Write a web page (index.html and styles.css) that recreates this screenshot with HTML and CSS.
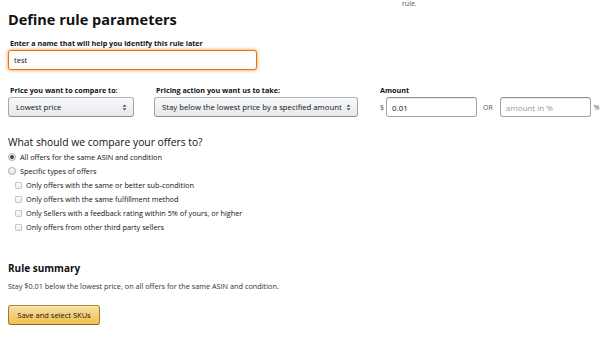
FILE: index.html
```html
<!DOCTYPE html>
<html lang="en">
<head>
  <meta charset="UTF-8" />
  <meta name="viewport" content="width=device-width, initial-scale=1.0"/>
  <title>Define rule parameters</title>
  <link rel="stylesheet" href="styles.css">
</head>
<body>
  <main class="page">
    <p class="top-note">rule.</p>
    <h1>Define rule parameters</h1>

    <label class="field-label" for="ruleName">Enter a name that will help you identify this rule later</label>
    <input type="text" id="ruleName" class="name-input" value="test" />

    <section class="price-row">
      <div class="col col-compare">
        <div class="field-label">Price you want to compare to:</div>
        <div class="select">
          <span>Lowest price</span>
          <svg class="arrows" width="5" height="7" viewBox="0 0 5 7"><path d="M0.5 2.8 L2.5 0.6 L4.5 2.8 Z M0.5 4.2 L2.5 6.4 L4.5 4.2 Z" fill="#555"/></svg>
        </div>
      </div>
      <div class="col col-action">
        <div class="field-label">Pricing action you want us to take:</div>
        <div class="select">
          <span>Stay below the lowest price by a specified amount</span>
          <svg class="arrows" width="5" height="7" viewBox="0 0 5 7"><path d="M0.5 2.8 L2.5 0.6 L4.5 2.8 Z M0.5 4.2 L2.5 6.4 L4.5 4.2 Z" fill="#555"/></svg>
        </div>
      </div>
      <div class="col col-amount">
        <div class="field-label">Amount</div>
        <div class="amount-inputs">
          <span class="unit">$</span>
          <input type="text" class="small-input" value="0.01" />
          <span class="or">OR</span>
          <input type="text" class="small-input" placeholder="amount in %" />
          <span class="unit">%</span>
        </div>
      </div>
    </section>

    <h2>What should we compare your offers to?</h2>
    <ul class="options">
      <li class="option"><span class="radio checked"></span>All offers for the same ASIN and condition</li>
      <li class="option"><span class="radio"></span>Specific types of offers</li>
      <li class="option sub"><span class="check"></span>Only offers with the same or better sub-condition</li>
      <li class="option sub"><span class="check"></span>Only offers with the same fulfillment method</li>
      <li class="option sub"><span class="check"></span>Only Sellers with a feedback rating within 5% of yours, or higher</li>
      <li class="option sub"><span class="check"></span>Only offers from other third party sellers</li>
    </ul>

    <h3>Rule summary</h3>
    <p class="summary">Stay $0.01 below the lowest price, on all offers for the same ASIN and condition.</p>

    <button type="button" class="save-btn">Save and select SKUs</button>
  </main>
</body>
</html>
```

FILE: styles.css
```css
body {
  margin: 0;
  padding: 0;
  background: #fff;
  color: #111;
  font-family: "Open Sans", Arial, sans-serif;
}
.page {
  padding: 0 8px;
}
.top-note {
  margin: 0 0 0 394px;
  font-size: 7px;
  line-height: 8px;
  height: 8px;
  color: #555;
}
h1 {
  margin: 3px 0 0;
  font-size: 14.5px;
  line-height: 18px;
  font-weight: 700;
}
.field-label {
  display: block;
  font-size: 7.2px;
  line-height: 10px;
  font-weight: 700;
  padding-left: 2px;
}
label.field-label {
  margin-top: 9px;
}
.name-input {
  display: block;
  box-sizing: border-box;
  width: 249px;
  height: 20px;
  margin: 2px 0 0;
  padding: 0 5px;
  font-family: inherit;
  font-size: 7.5px;
  color: #111;
  border: 1px solid #e77600;
  border-radius: 3px;
  box-shadow: 0 0 3px 1px rgba(228, 121, 17, 0.5);
  outline: none;
}
.price-row {
  display: flex;
  margin-top: 15px;
}
.col {
  flex: none;
}
.col .field-label {
  margin-bottom: 2px;
}
.col-compare {
  width: 126px;
  margin-right: 20px;
}
.col-action {
  width: 204px;
  margin-right: 22px;
}
.col-amount .field-label {
  padding-left: 0;
}
.select {
  box-sizing: border-box;
  height: 20px;
  display: flex;
  align-items: center;
  justify-content: space-between;
  padding: 0 6px 0 7px;
  font-size: 7.75px;
  color: #111;
  background: linear-gradient(#f7f8fa, #e7e9ec);
  border: 1px solid #adb1b8;
  border-color: #adb1b8 #a2a6ac #8d9096;
  border-radius: 3px;
  box-shadow: 0 1px 0 rgba(255,255,255,0.6) inset;
  white-space: nowrap;
}
.arrows {
  flex: none;
  margin-left: 4px;
}
.amount-inputs {
  display: flex;
  align-items: center;
  font-size: 7px;
}
.unit {
  color: #555;
}
.small-input {
  box-sizing: border-box;
  width: 91px;
  height: 20px;
  margin: 0 0 0 2px;
  padding: 0 5px;
  font-family: inherit;
  font-size: 8px;
  color: #111;
  border: 1px solid #a6a6a6;
  border-top-color: #949494;
  border-radius: 3px;
  box-shadow: 0 1px 0 rgba(255,255,255,0.5), 0 1px 0 rgba(0,0,0,0.07) inset;
}
.small-input::placeholder {
  color: #999;
}
.small-input + .or {
  margin: 0 5px 0 6px;
  color: #555;
}
.small-input + .unit {
  margin-left: 3px;
}
h2 {
  margin: 18px 0 0;
  font-size: 10.3px;
  line-height: 14px;
  font-weight: 400;
}
.options {
  list-style: none;
  margin: 1px 0 0;
  padding: 0;
}
.option {
  display: flex;
  align-items: center;
  height: 14px;
  font-size: 7.3px;
  color: #111;
}
.option.sub {
  padding-left: 7px;
}
.radio {
  box-sizing: border-box;
  width: 8px;
  height: 8px;
  margin-right: 4px;
  border-radius: 50%;
  border: 1px solid #aaa;
  background: linear-gradient(#fff, #e6e6e6);
  display: flex;
  align-items: center;
  justify-content: center;
}
.radio.checked::after {
  content: "";
  width: 4px;
  height: 4px;
  border-radius: 50%;
  background: #444;
}
.check {
  box-sizing: border-box;
  width: 7px;
  height: 7px;
  margin-right: 4px;
  border: 1px solid #c8c8c8;
  border-radius: 1px;
  background: linear-gradient(#fafafa, #eee);
}
h3 {
  margin: 27px 0 0;
  font-size: 10px;
  line-height: 14px;
  font-weight: 700;
}
.summary {
  margin: 6px 0 0;
  font-size: 7.3px;
  line-height: 10px;
  color: #333;
}
.save-btn {
  margin-top: 14px;
  box-sizing: border-box;
  width: 92px;
  height: 20px;
  padding: 0;
  font-family: inherit;
  font-size: 7.5px;
  color: #111;
  background: linear-gradient(#f7dfa5, #f0c14b);
  border: 1px solid #a88734;
  border-color: #a88734 #9c7e31 #846a29;
  border-radius: 3px;
  box-shadow: 0 1px 0 rgba(255,255,255,0.4) inset;
  cursor: pointer;
}
```
